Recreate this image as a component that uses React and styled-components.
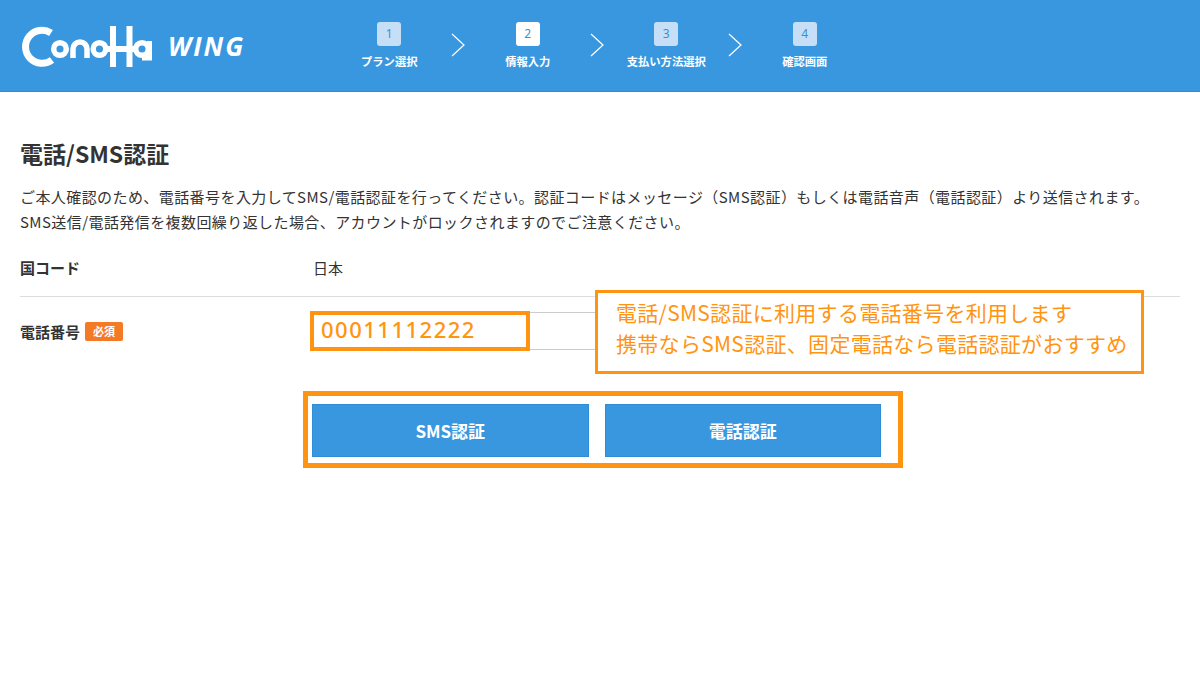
import React from 'react'
import styled, { createGlobalStyle } from "styled-components";

const GlobalStyle = createGlobalStyle`
    html, body {
      margin: 0;
      padding: 0;
      background: #fff;
    }
    body {
      font-family: "Noto Sans CJK JP", "Noto Sans", sans-serif;
      color: #333;
    }
`;

const Page = styled.div`
    width: 1200px;
    height: 698px;
    overflow: hidden;
`;

const Header = styled.header`
    height: 91px;
    background-color: #3997e0;
    border-bottom: 1px solid #2f8dd8;
    display: flex;
    align-items: center;
`;

const LogoArea = styled.div`
    width: 320px;
    box-sizing: border-box;
    padding-left: 20px;
    display: flex;
    align-items: center;
    gap: 14px;
`;

const WingText = styled.span`
    font-family: "Open Sans", sans-serif;
    font-size: 26px;
    font-weight: 700;
    font-style: italic;
    letter-spacing: 2px;
    color: #fff;
`;

const Steps = styled.ol`
    list-style: none;
    margin: 0;
    padding: 0;
    display: flex;
    align-items: flex-start;
`;

const Step = styled.li`
    width: 138.5px;
    display: flex;
    flex-direction: column;
    align-items: center;
    position: relative;
`;

const StepNumber = styled.span`
    width: 24px;
    height: 24px;
    border-radius: 3px;
    background-color: ${(p) => (p.$active ? "#fff" : "#c6dff6")};
    color: #3a8fd8;
    font-family: "Noto Sans", sans-serif;
    font-size: 12px;
    line-height: 24px;
    text-align: center;
`;

const StepLabel = styled.span`
    margin-top: 7px;
    font-size: 11.3px;
    line-height: 16px;
    font-weight: 700;
    color: #fff;
    white-space: nowrap;
`;

const Chevron = styled.svg`
    position: absolute;
    left: 131px;
    top: 11px;
`;

const Main = styled.main`
    padding: 45px 20px 0;
`;

const Title = styled.h1`
    margin: 0 0 15px;
    font-size: 23px;
    line-height: 32px;
    font-weight: 700;
    color: #333;
`;

const Lead = styled.p`
    margin: 0;
    font-size: 15px;
    line-height: 25px;
    letter-spacing: 0.42px;
    color: #333;
    white-space: nowrap;
`;

const Row = styled.div`
    display: flex;
    width: 1160px;
    align-items: center;
    box-sizing: border-box;
    height: ${(p) => p.$height}px;
    padding-top: ${(p) => p.$top || 0}px;
    border-bottom: ${(p) => (p.$line ? "1px solid #ddd" : "none")};
`;

const Label = styled.div`
    width: 293px;
    flex-shrink: 0;
    display: flex;
    align-items: center;
    gap: 5px;
    font-size: 15px;
    font-weight: 700;
    color: #333;
`;

const Value = styled.div`
    font-size: 15px;
    color: #333;
`;

const Required = styled.span`
    width: 38px;
    height: 19px;
    border-radius: 2px;
    background-color: #f47a26;
    color: #fff;
    font-size: 11px;
    line-height: 19px;
    font-weight: 700;
    text-align: center;
`;

const PhoneField = styled.div`
    width: 800px;
    height: 38px;
    box-sizing: border-box;
    border-top: 1px solid #ccc;
    border-bottom: 1px solid #ccc;
    position: relative;
`;

const InputMark = styled.div`
    position: absolute;
    left: -3px;
    top: -2px;
    width: 220px;
    height: 40px;
    box-sizing: border-box;
    border: 4px solid #ff9412;
    background: #fff;
    color: #ff9412;
    font-family: "Noto Sans", sans-serif;
    font-size: 22px;
    font-weight: 500;
    letter-spacing: 1.5px;
    line-height: 28px;
    padding-left: 7px;
`;

const Callout = styled.div`
    position: absolute;
    left: 595px;
    top: 290px;
    width: 549px;
    height: 84px;
    box-sizing: border-box;
    border: 3px solid #ff9412;
    background: #fff;
    color: #ff9412;
    font-size: 21px;
    letter-spacing: 0.3px;
    line-height: 31px;
    padding: 4px 0 0 18px;
    white-space: nowrap;
`;

const ButtonFrame = styled.div`
    position: relative;
    margin: 26px 0 0 283px;
    width: 600px;
    height: 77px;
    box-sizing: border-box;
    border: 5px solid #ff9412;
    display: flex;
    gap: 16px;
    padding: 8px 0 0 4px;
`;

const Button = styled.button`
    width: 276.5px;
    height: 53px;
    border: 1px solid #2f8dd8;
    background-color: #3997e0;
    color: #fff;
    font-family: inherit;
    font-size: 17px;
    font-weight: 700;
    padding: 0;
`;

const Logo = () => (
    <svg width="134" height="45" viewBox="20 23 134 45" fill="none" aria-label="ConoHa">
        <path d="M51 33 A16.5 16.5 0 1 0 52 60" stroke="#fff" strokeWidth="7" />
        <circle cx="60" cy="49" r="6.3" stroke="#fff" strokeWidth="5.5" />
        <path d="M73 58 V49 A7 7 0 0 1 87 49 V58" stroke="#fff" strokeWidth="5.5" />
        <circle cx="99.5" cy="49" r="6.3" stroke="#fff" strokeWidth="5.5" />
        <path d="M113 26 V67 M129.5 26 V67" stroke="#fff" strokeWidth="6" />
        <path d="M106 49 H136" stroke="#fff" strokeWidth="6" />
        <circle cx="142" cy="49" r="6.3" stroke="#fff" strokeWidth="5.5" />
        <path d="M149.5 41 V58 H142" stroke="#fff" strokeWidth="5" />
    </svg>
);

const steps = ["プラン選択", "情報入力", "支払い方法選択", "確認画面"];

const App = () => {
    return (
        <Page>
            <GlobalStyle />
            <Header>
                <LogoArea>
                    <Logo />
                    <WingText>WING</WingText>
                </LogoArea>
                <Steps>
                    {steps.map((label, i) => (
                        <Step key={label}>
                            <StepNumber $active={i === 1}>{i + 1}</StepNumber>
                            <StepLabel>{label}</StepLabel>
                            {i < 3 && (
                                <Chevron width="14" height="24" viewBox="0 0 14 24" fill="none">
                                    <path d="M1 1 L13 12 L1 23" stroke="#fff" strokeWidth="1.2" />
                                </Chevron>
                            )}
                        </Step>
                    ))}
                </Steps>
            </Header>
            <Main>
                <Title>電話/SMS認証</Title>
                <Lead>
                    ご本人確認のため、電話番号を入力してSMS/電話認証を行ってください。認証コードはメッセージ（SMS認証）もしくは電話音声（電話認証）より送信されます。
                    <br />
                    SMS送信/電話発信を複数回繰り返した場合、アカウントがロックされますのでご注意ください。
                </Lead>
                <Row $height={63} $top={5} $line>
                    <Label>国コード</Label>
                    <Value>日本</Value>
                </Row>
                <Row $height={68}>
                    <Label>
                        電話番号
                        <Required>必須</Required>
                    </Label>
                    <PhoneField>
                        <InputMark>00011112222</InputMark>
                    </PhoneField>
                </Row>
                <ButtonFrame>
                    <Button>SMS認証</Button>
                    <Button>電話認証</Button>
                </ButtonFrame>
            </Main>
            <Callout>
                電話/SMS認証に利用する電話番号を利用します
                <br />
                携帯ならSMS認証、固定電話なら電話認証がおすすめ
            </Callout>
        </Page>
    );
};

export default App
